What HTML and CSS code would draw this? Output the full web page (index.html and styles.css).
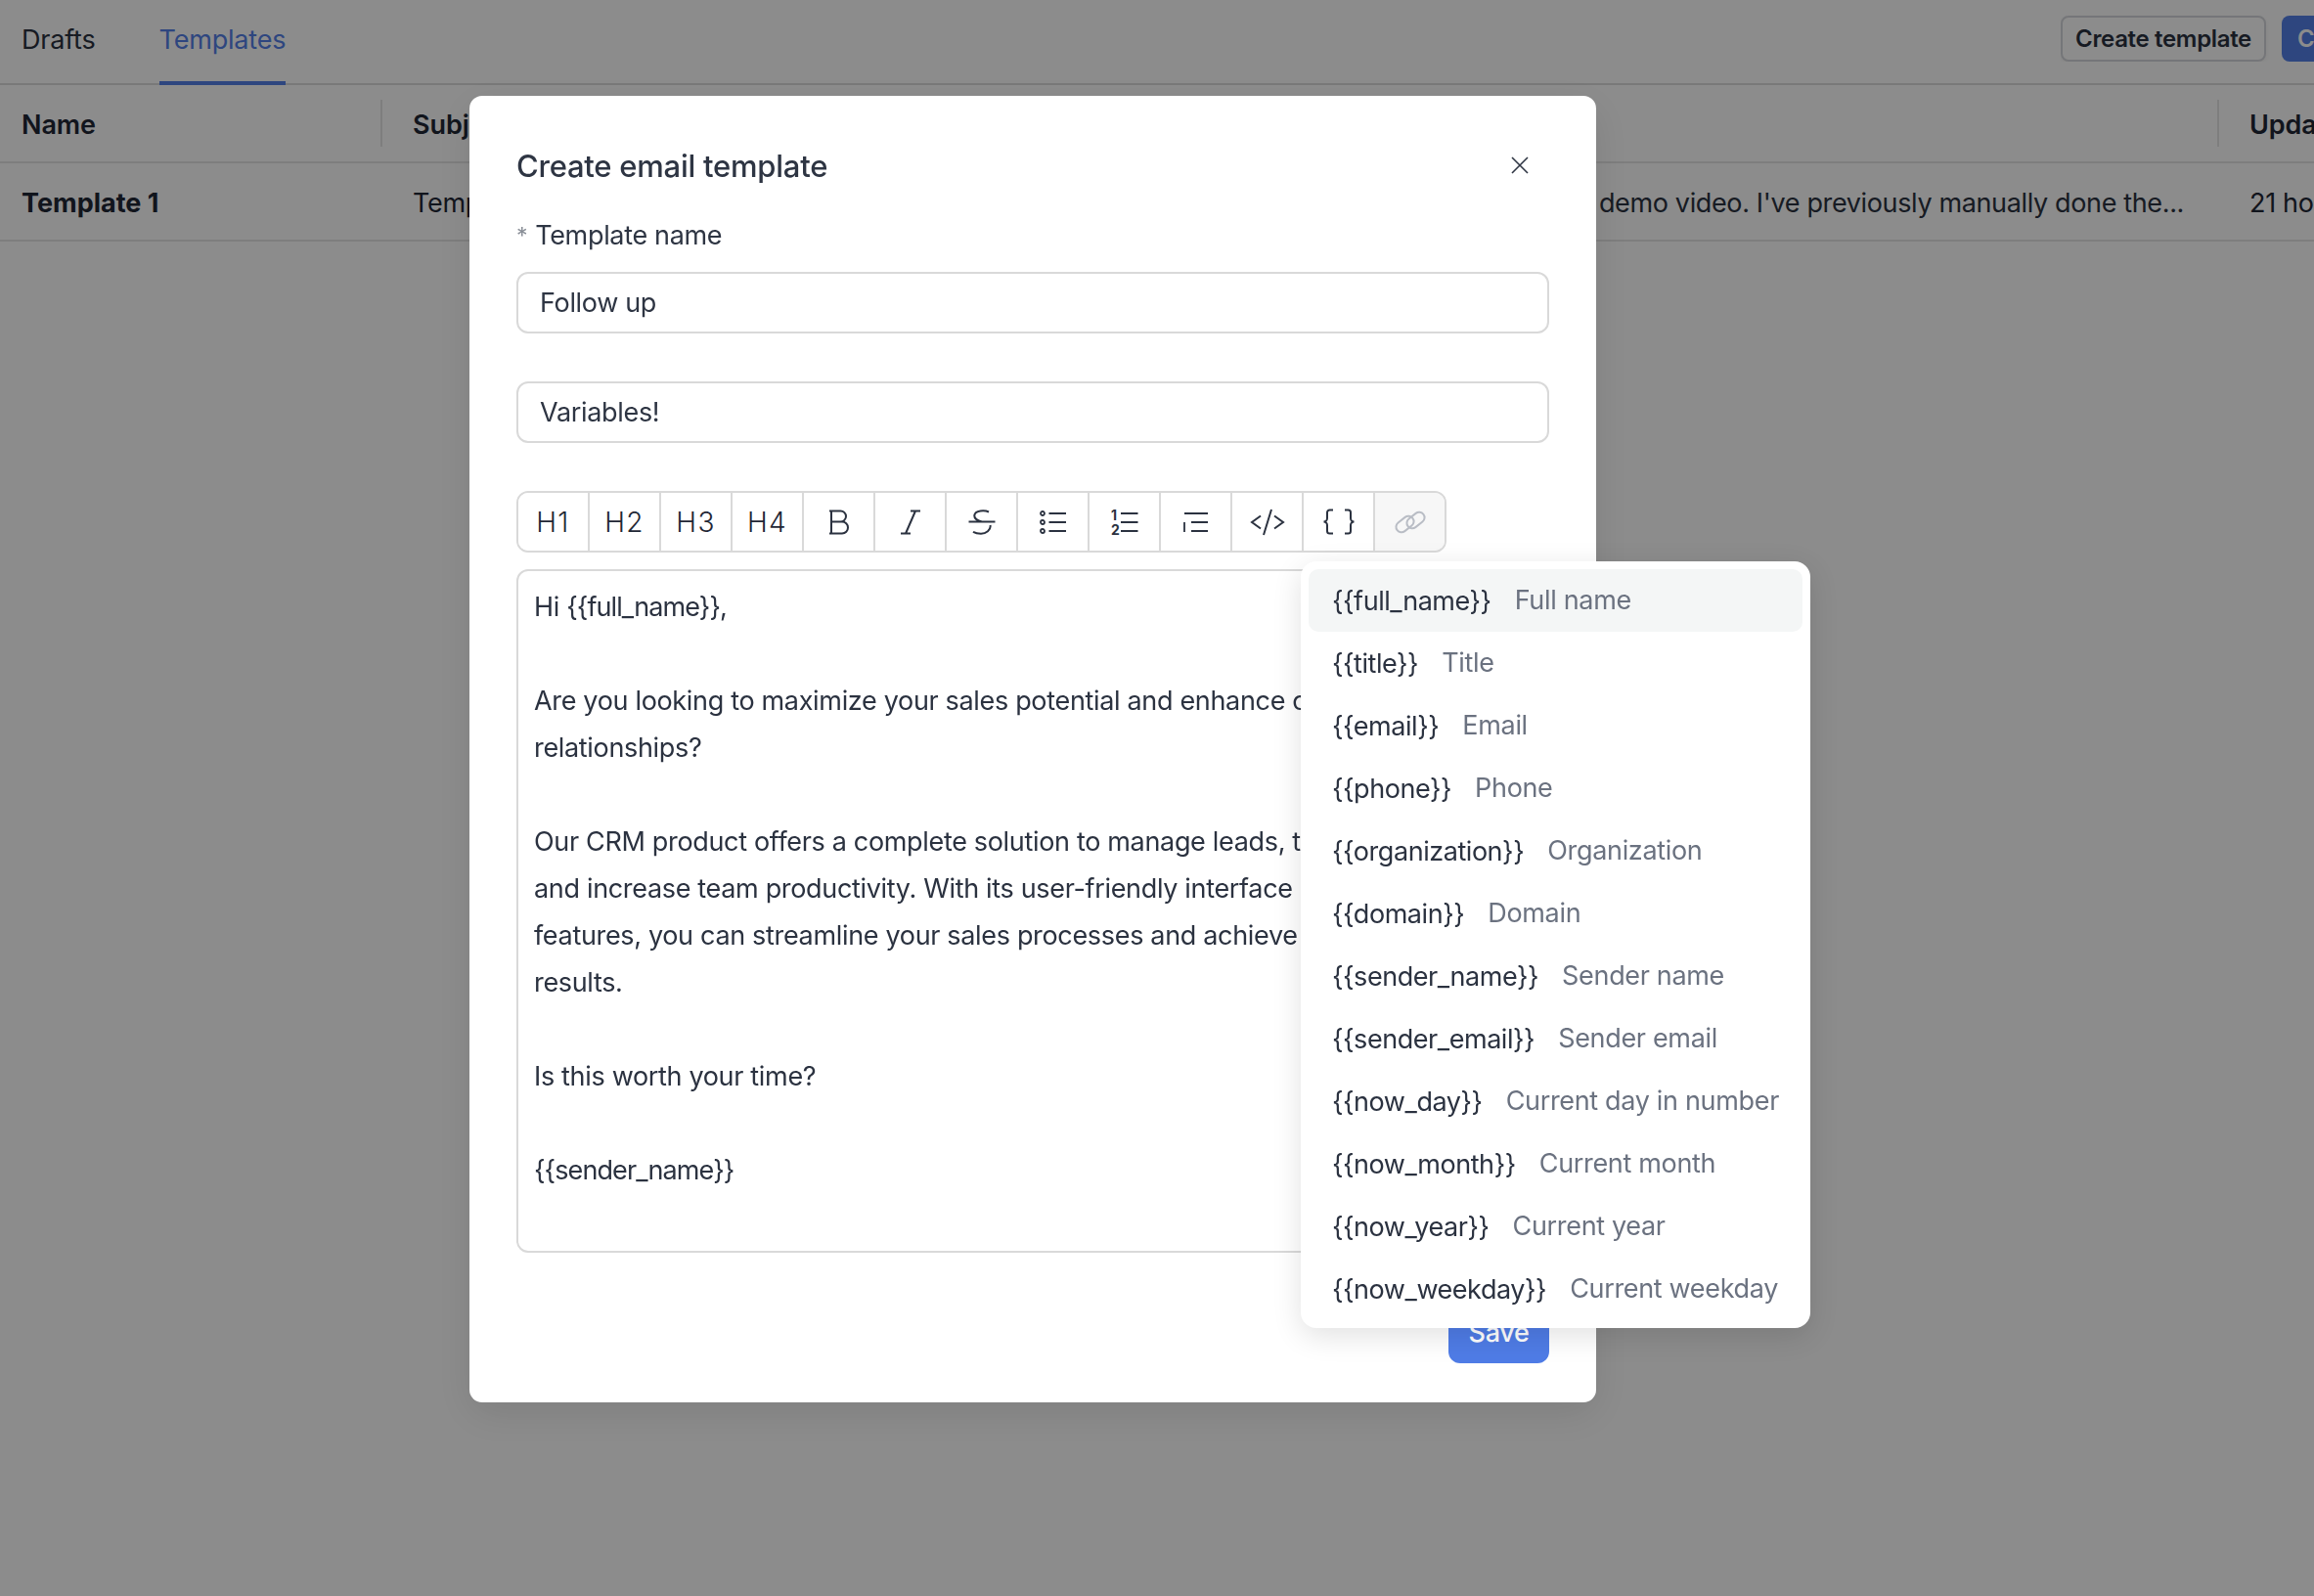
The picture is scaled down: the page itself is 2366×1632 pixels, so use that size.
FILE: index.html
```html
<!DOCTYPE html>
<html lang="en">
<head>
<meta charset="utf-8">
<title>Create email template</title>
<link rel="stylesheet" href="styles.css">
</head>
<body>
<div class="page">
  <header class="topbar">
    <nav class="tabs">
      <a class="tab">Drafts</a>
      <a class="tab tab-active">Templates</a>
    </nav>
    <div class="actions">
      <button class="btn btn-outline">Create template</button>
      <button class="btn btn-solid">Create</button>
    </div>
  </header>
  <div class="table">
    <div class="row row-head">
      <div class="cell cell-name">Name</div>
      <div class="cell cell-subject">Subject</div>
      <div class="cell cell-body"></div>
      <div class="cell cell-updated">Updated</div>
    </div>
    <div class="row">
      <div class="cell cell-name strong">Template 1</div>
      <div class="cell cell-subject">Template subject</div>
      <div class="cell cell-body">Hi, here is the demo video. I've previously manually done the...</div>
      <div class="cell cell-updated">21 hours ago</div>
    </div>
  </div>
</div>

<div class="overlay">
  <section class="modal">
    <div class="modal-head">
      <h2 class="modal-title">Create email template</h2>
      <button class="close" aria-label="Close">
        <svg class="close-icon" viewBox="0 0 18 18"><path d="M1 1L17 17M17 1L1 17"/></svg>
      </button>
    </div>
    <label class="label"><span class="req">*</span>Template name</label>
    <div class="input">Follow up</div>
    <div class="input input-subject">Variables!</div>

    <div class="toolbar">
      <button class="tool tool-text">H1</button>
      <button class="tool tool-text">H2</button>
      <button class="tool tool-text">H3</button>
      <button class="tool tool-text">H4</button>
      <button class="tool" aria-label="Bold"><svg class="icon" width="22" height="26" viewBox="0 0 22 26"><path d="M1 1.5h11.5a5.5 5.5 0 0 1 0 11H3M3 1.5v23M1 24.500h13a6 6 0 0 0 0-12H12"/></svg></button>
      <button class="tool" aria-label="Italic"><svg class="icon" width="22" height="26" viewBox="0 0 22 26"><path d="M11 1.500H21M1 24.500H11M16 1.500L6 24.500"/></svg></button>
      <button class="tool" aria-label="Strikethrough"><svg class="icon" width="28" height="26" viewBox="0 0 28 26"><path d="M0.500 12.500H27.500M21 2.500C17 0.500 7 0.500 6.300 6C6 10 10 11.500 14 12.500M22.500 16C23.500 21 18 24.700 13 24.700C10 24.700 7 24 5 22.800"/></svg></button>
      <button class="tool" aria-label="Bullet list"><svg class="icon icon-thin" width="28" height="24" viewBox="0 0 28 24"><circle cx="3" cy="3" r="2"/><circle cx="3" cy="12" r="2"/><circle cx="3" cy="21" r="2"/><path d="M9.500 3H27M9.500 12H27M9.500 21H27"/></svg></button>
      <button class="tool" aria-label="Ordered list"><svg class="icon icon-thin" width="28" height="28" viewBox="0 0 28 28"><text class="icon-num" x="0" y="12">1</text><text class="icon-num" x="0" y="26.500">2</text><path d="M10 5H27.500M10 14H27.500M10 23H27.500"/></svg></button>
      <button class="tool" aria-label="Quote"><svg class="icon icon-thin" width="26" height="24" viewBox="0 0 26 24"><path d="M1 3H25M1 12V22M8 12H25M8 21H25"/></svg></button>
      <button class="tool" aria-label="Code"><svg class="icon" width="36" height="28" viewBox="0 0 36 28"><path d="M11 7.500L2 14L11 20.500M22 1L14 27M25 7.500L34 14L25 20.500"/></svg></button>
      <button class="tool" aria-label="Variables"><svg class="icon" width="34" height="27" viewBox="0 0 34 27"><path d="M11 1.500H7.500a2.500 2.500 0 0 0-2.500 2.500V10a3.500 3.500 0 0 1-3.500 3.500a3.500 3.500 0 0 1 3.500 3.500V23a2.500 2.500 0 0 0 2.500 2.500H11M23 1.500H26.500a2.500 2.500 0 0 1 2.500 2.500V10a3.500 3.500 0 0 0 3.500 3.500a3.500 3.500 0 0 0-3.500 3.500V23a2.500 2.500 0 0 1-2.500 2.500H23"/></svg></button>
      <button class="tool tool-disabled" aria-label="Link"><svg class="icon icon-link" width="34" height="24" viewBox="0 0 34 24"><rect x="1.500" y="8.500" width="20" height="11" rx="5.500" transform="rotate(-38 11.500 14)"/><rect x="12.500" y="4.500" width="20" height="11" rx="5.500" transform="rotate(-38 22.500 10)"/></svg></button>
    </div>

    <div class="editor">
      <p>Hi <span class="token">{{full_name}}</span>,</p>
      <p>Are you looking to maximize your sales potential and enhance customer<br>relationships?</p>
      <p>Our CRM product offers a complete solution to manage leads, track deals,<br>and increase team productivity. With its user-friendly interface and robust<br>features, you can streamline your sales processes and achieve outstanding<br>results.</p>
      <p>Is this worth your time?</p>
      <p><span class="token">{{sender_name}}</span></p>
    </div>

    <div class="modal-foot">
      <button class="btn-save">Save</button>
    </div>

    <ul class="menu">
      <li class="menu-item menu-item-active"><span class="var">{{full_name}}</span><span class="var-label">Full name</span></li>
      <li class="menu-item"><span class="var">{{title}}</span><span class="var-label">Title</span></li>
      <li class="menu-item"><span class="var">{{email}}</span><span class="var-label">Email</span></li>
      <li class="menu-item"><span class="var">{{phone}}</span><span class="var-label">Phone</span></li>
      <li class="menu-item"><span class="var">{{organization}}</span><span class="var-label">Organization</span></li>
      <li class="menu-item"><span class="var">{{domain}}</span><span class="var-label">Domain</span></li>
      <li class="menu-item"><span class="var">{{sender_name}}</span><span class="var-label">Sender name</span></li>
      <li class="menu-item"><span class="var">{{sender_email}}</span><span class="var-label">Sender email</span></li>
      <li class="menu-item"><span class="var">{{now_day}}</span><span class="var-label">Current day in number</span></li>
      <li class="menu-item"><span class="var">{{now_month}}</span><span class="var-label">Current month</span></li>
      <li class="menu-item"><span class="var">{{now_year}}</span><span class="var-label">Current year</span></li>
      <li class="menu-item"><span class="var">{{now_weekday}}</span><span class="var-label">Current weekday</span></li>
    </ul>
  </section>
</div>
</body>
</html>
```
FILE: styles.css
```css
* { box-sizing: border-box; }
html, body { margin: 0; height: 100%; overflow: hidden; background: #fff; }
body { font-family: Inter, "Noto Sans", sans-serif; font-size: 27px; color: #1f2735; letter-spacing: -0.33px; }
button { font-family: inherit; letter-spacing: inherit; cursor: pointer; }

.page { width: 2366px; height: 1632px; overflow: hidden; }

.topbar { display: flex; justify-content: space-between; align-items: flex-start; height: 87px; border-bottom: 2px solid #dcdcdc; padding-left: 22px; }
.tabs { display: flex; gap: 65px; height: 87px; }
.tab { display: block; height: 87px; padding-top: 25px; line-height: 32px; color: #2b3240; letter-spacing: -0.2px; }
.tab-active { color: #5580e8; border-bottom: 4px solid #5580e8; }
.actions { display: flex; gap: 16px; padding-top: 16px; width: 259px; flex: none; overflow: hidden; }
.btn { height: 47px; border-radius: 8px; font-size: 24px; font-weight: 600; padding: 0; flex: none; }
.btn-outline { width: 210px; background: #fff; border: 2px solid #d6d8dc; color: #2b3240; box-shadow: 0 2px 4px rgba(0,0,0,.05); }
.btn-solid { width: 100px; background: #5580e8; border: 0; color: #fff; text-align: left; padding-left: 16px; }

.row { display: grid; grid-template-columns: 389px 1fr 1fr 99px; height: 80px; align-items: center; border-bottom: 2px solid #e6e6e6; white-space: nowrap; }
.cell { overflow: hidden; padding: 0 22px; padding-top: 2px; }
.cell-subject { padding-left: 33px; }
.cell-body { text-align: right; padding-right: 34px; color: #2b3240; letter-spacing: -0.36px; }
.cell-updated { padding-left: 33px; padding-right: 0; }
.row-head { font-weight: 600; letter-spacing: -0.1px; }
.row-head .cell-subject, .row-head .cell-updated { position: relative; }
.row-head .cell-subject::before, .row-head .cell-updated::before { content: ""; position: absolute; left: 0; top: 0; bottom: 0; width: 2px; background: #e6e6e6; }
.row-head .cell { line-height: 44px; padding-top: 4px; }
.strong { font-weight: 700; letter-spacing: 0; }

.overlay { position: fixed; inset: 0; background: rgba(0,0,0,.45); padding: 98px 0 0 480px; }
.modal { position: relative; width: 1152px; height: 1336px; background: #fff; border-radius: 13px; padding: 48px; box-shadow: 0 12px 40px rgba(0,0,0,.1); color: #2e3543; }
.modal-head { display: flex; justify-content: space-between; align-items: center; height: 46px; }
.modal-title { margin: 0; padding-top: 2px; font-size: 31px; font-weight: 500; line-height: 48px; letter-spacing: -0.24px; }
.close { border: 0; background: none; padding: 0; margin-right: 21px; height: 18px; display: flex; }
.close-icon { width: 18px; height: 18px; fill: none; stroke: #2e3543; stroke-width: 1.6; }

.label { display: block; margin-top: 33px; height: 32px; line-height: 32px; }
.req { color: #888d96; font-size: 23px; margin-right: 8px; vertical-align: 1px; }
.input { height: 63px; margin-top: 21px; border: 2px solid #d9d9d9; border-radius: 12px; padding: 0 22px; line-height: 60px; background: #fff; }
.input-subject { margin-top: 49px; }

.toolbar { display: flex; width: 951px; height: 63px; margin-top: 49px; border: 2px solid #d9d9d9; border-radius: 12px; overflow: hidden; }
.tool { flex: 1 1 0; display: flex; align-items: center; justify-content: center; border: 0; border-right: 2px solid #d9d9d9; background: #fff; padding: 0; color: #1f2735; }
.tool:last-child { border-right: 0; }
.tool-text { font-size: 28px; font-weight: 300; letter-spacing: 1.4px; }
.tool-disabled { background: #f7f7f7; }
.icon { fill: none; stroke: #2b3240; stroke-width: 2; }
.icon-thin { stroke-width: 1.8; }
.icon-num { fill: #2b3240; stroke: none; font-family: Inter, sans-serif; font-size: 14px; font-weight: 700; }
.icon-link { stroke: #b9bdc5; }

.editor { height: 699px; margin-top: 17px; border: 2px solid #d9d9d9; border-radius: 12px; padding: 13px 16px 0; overflow: hidden; line-height: 48px; white-space: nowrap; color: #2b3240; letter-spacing: -0.33px; }
.editor p { margin: 0 0 48px; }
.token { letter-spacing: -0.9px; }

.modal-foot { display: flex; justify-content: flex-end; margin-top: 50px; }
.btn-save { width: 103px; height: 63px; border: 0; border-radius: 12px; background: #4f7ce6; color: #fff; font-size: 27px; font-weight: 500; padding: 0; }

.menu { position: absolute; left: 850px; top: 476px; width: 521px; height: 784px; margin: 0; padding: 8px; list-style: none; background: #fff; border-radius: 16px; box-shadow: 0 8px 30px rgba(0,0,0,.12); }
.menu-item { display: flex; align-items: center; gap: 24px; height: 64px; padding: 0 17px 2px 24px; border-radius: 10px; white-space: nowrap; }
.menu-item-active { background: #f4f6f6; }
.var { padding-top: 3px; color: #2b3240; letter-spacing: -0.45px; }
.var-label { color: #6b7280; }
```
